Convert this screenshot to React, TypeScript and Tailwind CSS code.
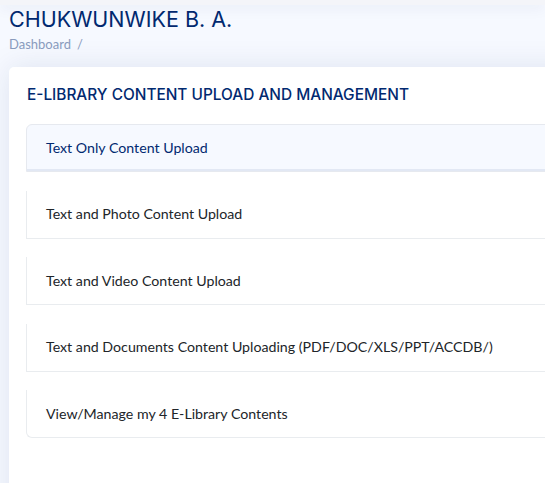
const items = [
  "Text Only Content Upload",
  "Text and Photo Content Upload",
  "Text and Video Content Upload",
  "Text and Documents Content Uploading (PDF/DOC/XLS/PPT/ACCDB/)",
  "View/Manage my 4 E-Library Contents",
];

export default function App() {
  return (
    <div className="w-[545px] h-[483px] overflow-hidden bg-[#f6f9ff] relative" style={{ fontFamily: "Lato, 'Noto Sans', sans-serif" }}>
      <div className="h-[5px] bg-[#f4f5f9] shadow-[0_2px_14px_rgba(1,41,112,0.10)] relative z-10"></div>
      <div className="pl-[9px] pt-0">
        <h1 className="text-[21.5px] leading-[28px] text-[#012970] font-normal" style={{ fontFamily: "Inter, sans-serif" }}>
          CHUKWUNWIKE B. A.
        </h1>
        <div className="text-[13px] leading-[18px] text-[#899bbd] mt-[2px] flex gap-[6px]">
          <span>Dashboard</span>
          <span>/</span>
        </div>
      </div>
      <div className="ml-[9px] mt-[14px] w-[580px] h-[500px] bg-white rounded-[5px] shadow-[0_0_30px_rgba(1,41,112,0.1)] pl-[17px] pt-[18px]">
        <h5 className="text-[15.4px] leading-[20px] font-medium text-[#012970] pl-[1px]" style={{ fontFamily: "Inter, sans-serif" }}>
          E-LIBRARY CONTENT UPLOAD AND MANAGEMENT
        </h5>
        <div className="mt-[19px] flex flex-col gap-[18.5px]">
          {items.map((t, i) => (
            <div
              key={t}
              className={
                i === 0
                  ? "h-[48px] flex items-center pl-[19px] bg-[#f6f9ff] text-[#012970] border border-[#e6e9ef] rounded-tl-[6px] shadow-[inset_0_-2px_0_rgba(1,41,112,0.08)] text-[14.2px]"
                  : i === items.length - 1
                  ? "h-[48px] flex items-center pl-[19px] bg-white text-[#212529] border-l border-b border-[#e9ecef] rounded-bl-[6px] text-[14.2px]"
                  : "h-[48px] flex items-center pl-[19px] bg-white text-[#212529] border-l border-b border-[#e9ecef] text-[14.2px]"
              }
            >
              {t}
            </div>
          ))}
        </div>
      </div>
    </div>
  );
}
